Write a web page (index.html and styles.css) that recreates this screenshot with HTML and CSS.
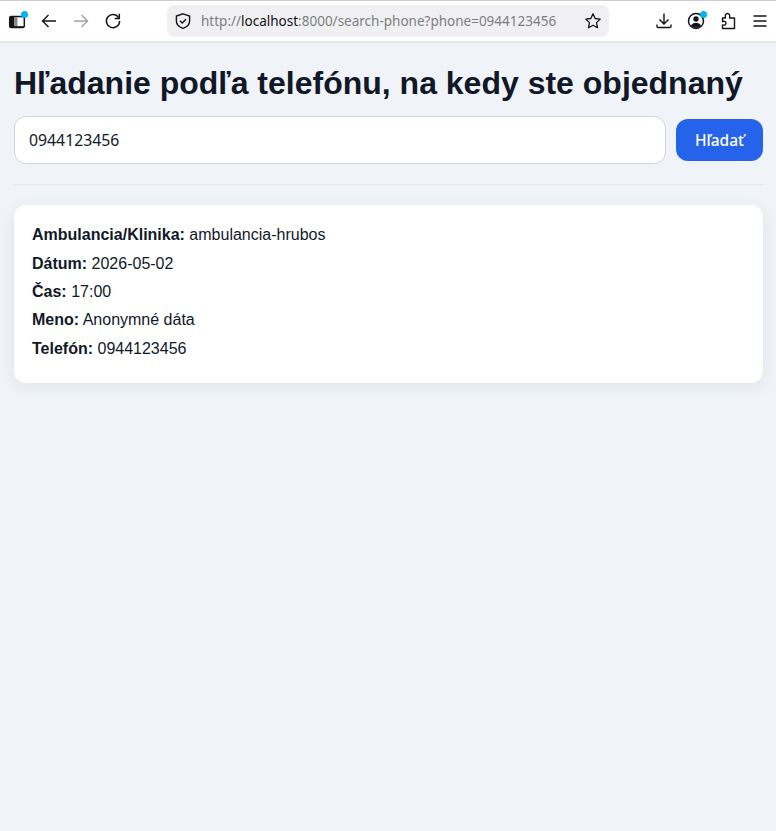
FILE: index.html
```html
<!DOCTYPE html>
<html lang="sk">
<head>
  <meta charset="UTF-8">
  <title>Hľadanie podľa telefónu</title>
  <link rel="stylesheet" href="styles.css">
</head>
<body>
  <!-- browser toolbar -->
  <div class="toolbar">
    <div class="tool-group">
      <span class="tool">
        <svg width="18" height="18" viewBox="0 0 18 18" fill="none" stroke="#15141a" stroke-width="1.500"><rect x="1.700" y="4.500" width="14.600" height="11" rx="1.500"/><rect x="2" y="5" width="4.500" height="10" fill="#15141a" stroke="none"/><rect x="6.500" y="5" width="3" height="10" fill="#8a8a8e" stroke="none"/><rect x="2" y="14.200" width="14" height="1.200" fill="#15141a" stroke="none"/></svg>
        <i class="dot"></i>
      </span>
      <span class="tool">
        <svg width="18" height="18" viewBox="0 0 18 18" fill="none" stroke="#15141a" stroke-width="1.400"><path d="M16 9H2.500M8.500 3 2.500 9l6 6"/></svg>
      </span>
      <span class="tool">
        <svg width="18" height="18" viewBox="0 0 18 18" fill="none" stroke="#a3a3a6" stroke-width="1.400"><path d="M2 9h13.500M9.500 3l6 6-6 6"/></svg>
      </span>
      <span class="tool">
        <svg width="18" height="18" viewBox="0 0 18 18" fill="none" stroke="#15141a" stroke-width="1.500"><path d="M14.600 5.600A6.600 6.600 0 1 0 15.600 9"/><path d="M15.300 1.800v4.600h-4.600"/></svg>
      </span>
    </div>
    <div class="urlbar">
      <svg width="18" height="18" viewBox="0 0 18 18" fill="none" stroke="#15141a" stroke-width="1.400"><path d="M9 1.800 15.600 4v5c0 3.600-2.800 6-6.600 7.300C5.200 15 2.400 12.600 2.400 9V4z"/><path d="m6 8.800 2.200 2.200L12 7.200"/></svg>
      <span class="url"><span class="url-dim">http://</span>localhost<span class="url-dim">:8000/search-phone?phone=0944123456</span></span>
      <svg class="star" width="18" height="18" viewBox="0 0 18 18" fill="none" stroke="#15141a" stroke-width="1.300" stroke-linejoin="round"><path d="m9 1.800 2.200 4.700 5 .6-3.700 3.500 1 5.100L9 13.200l-4.500 2.500 1-5.100-3.700-3.500 5-.6z"/></svg>
    </div>
    <div class="tool-group tool-group-right">
      <span class="tool">
        <svg width="18" height="18" viewBox="0 0 18 18" fill="none" stroke="#15141a" stroke-width="1.400"><path d="M9 1.500v10M4.500 7.500 9 12l4.500-4.500M2 12.500v1.800c0 .8.500 1.200 1.200 1.200h11.600c.7 0 1.200-.4 1.200-1.200v-1.800"/></svg>
      </span>
      <span class="tool">
        <svg width="18" height="18" viewBox="0 0 18 18" fill="none" stroke="#15141a" stroke-width="1.500"><circle cx="9" cy="9" r="7.500"/><circle cx="9" cy="7" r="2.700" fill="#15141a" stroke="none"/><path d="M4 13.500c1-2 3-2.500 5-2.500s4 .5 5 2.500c-1.300 1.500-3 2.300-5 2.300s-3.700-.8-5-2.300z" fill="#15141a" stroke="none"/></svg>
        <i class="dot"></i>
      </span>
      <span class="tool">
        <svg width="18" height="18" viewBox="0 0 18 18" fill="none" stroke="#15141a" stroke-width="1.400" stroke-linejoin="round"><path d="M3.500 6h3c-.8-2.500.2-4.500 2-4.500s2.800 2 2 4.500h5v10.500h-12V13c2.500.6 3.500-.5 3.500-1.800S6 8.900 3.500 9.500z"/></svg>
      </span>
      <span class="tool">
        <svg width="18" height="18" viewBox="0 0 18 18" fill="none" stroke="#15141a" stroke-width="1.400"><path d="M2.500 4h13M2.500 9h13M2.500 14h13"/></svg>
      </span>
    </div>
  </div>

  <main class="page">
    <h1>Hľadanie podľa telefónu, na kedy ste objednaný</h1>

    <form class="search">
      <input class="search-input" type="text" value="0944123456">
      <button class="search-btn" type="button">Hľadať</button>
    </form>

    <hr class="divider">

    <div class="card">
      <p><strong>Ambulancia/Klinika:</strong> ambulancia-hrubos</p>
      <p><strong>Dátum:</strong> 2026-05-02</p>
      <p><strong>Čas:</strong> 17:00</p>
      <p><strong>Meno:</strong> Anonymné dáta</p>
      <p><strong>Telefón:</strong> 0944123456</p>
    </div>
  </main>
</body>
</html>
```
FILE: styles.css
```css
html {
  height: 100%;
}

body {
  margin: 0;
  min-height: 100%;
  background-color: #f0f4f9;
  color: #111827;
  font-family: 'Liberation Sans', Arial, sans-serif;
}

/* browser toolbar */
.toolbar {
  display: flex;
  align-items: center;
  height: 40px;
  background-color: #fff;
  border-top: 1px solid #cfcdd2;
  border-bottom: 2px solid #e3e6ec;
}

.tool-group {
  display: flex;
  align-items: center;
  gap: 14px;
  padding-left: 8px;
}

.tool-group-right {
  gap: 14px;
  margin-left: auto;
  padding-left: 0;
  padding-right: 7px;
}

.tool {
  position: relative;
  display: flex;
  width: 18px;
  height: 18px;
}

.dot {
  position: absolute;
  top: -1px;
  right: -2px;
  width: 7px;
  height: 7px;
  border-radius: 50%;
  background-color: #00b3f4;
}

.urlbar {
  display: flex;
  align-items: center;
  box-sizing: border-box;
  width: 442px;
  height: 32px;
  margin-left: 45px;
  padding: 0 7px;
  border-radius: 8px;
  background-color: #f0f0f2;
}

.url {
  margin-left: 9px;
  color: #15141a;
  font-family: 'Noto Sans', sans-serif;
  font-size: 13.500px;
  white-space: nowrap;
}

.url-dim {
  color: #7f7f83;
}

.star {
  margin-left: auto;
}

/* page */
.page {
  padding: 0 13px 0 14px;
}

h1 {
  margin: 0;
  padding-top: 22px;
  font-size: 32px;
  line-height: 37px;
  font-weight: 700;
  white-space: nowrap;
}

.search {
  display: flex;
  align-items: center;
  gap: 10px;
  margin-top: 14px;
}

.search-input {
  flex: 1;
  box-sizing: border-box;
  min-width: 0;
  height: 48px;
  padding: 0 14px;
  border: 1px solid #cbd5e1;
  border-radius: 12px;
  background-color: #fff;
  color: #111827;
  font-family: 'Noto Sans', sans-serif;
  font-size: 15.800px;
}

.search-btn {
  width: 87px;
  height: 42px;
  border: 0;
  border-radius: 12px;
  background-color: #2563eb;
  color: #fff;
  font-family: 'Noto Sans', sans-serif;
  font-size: 15.500px;
  font-weight: 500;
}

.divider {
  height: 1px;
  margin: 20px 0;
  border: 0;
  background-color: #e2e8f0;
}

.card {
  padding: 16.200px 18px 19.800px;
  border-radius: 12px;
  background-color: #fff;
  box-shadow: 0 4px 18px rgba(15, 23, 42, 0.07);
}

.card p {
  margin: 0;
  font-size: 16px;
  line-height: 28.400px;
}
```
